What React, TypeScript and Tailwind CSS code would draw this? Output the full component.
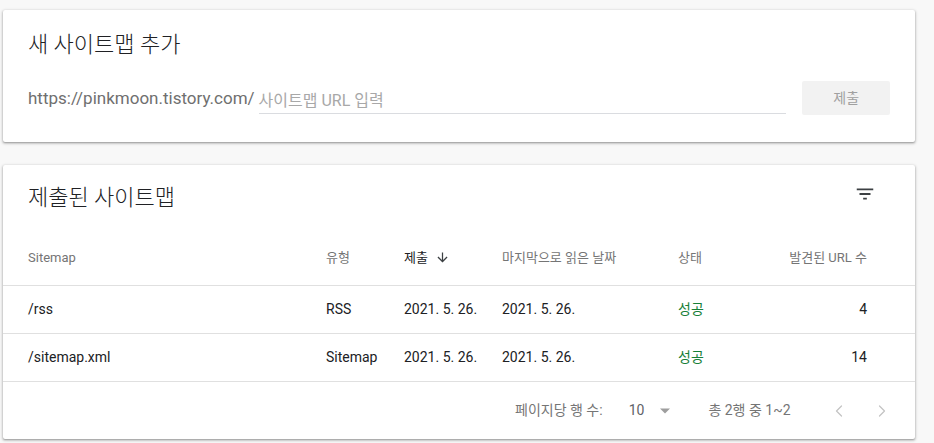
import { ChevronLeft, ChevronRight } from "lucide-react";

const ROWS = [
  { path: "/rss", type: "RSS", submitted: "2021. 5. 26.", read: "2021. 5. 26.", status: "성공", urls: 4 },
  { path: "/sitemap.xml", type: "Sitemap", submitted: "2021. 5. 26.", read: "2021. 5. 26.", status: "성공", urls: 14 },
];

const font = { fontFamily: 'Roboto, "Noto Sans CJK KR", sans-serif' };

function FilterIcon() {
  return (
    <svg width="22" height="22" viewBox="0 0 24 24" fill="#3c4043" aria-hidden>
      <path d="M10 18h4v-2h-4v2zM3 6v2h18V6H3zm3 7h12v-2H6v2z" />
    </svg>
  );
}

export default function App() {
  return (
    <div style={font} className="min-h-[443px] w-[934px] bg-[#f8f8f8] pt-[10px] pl-[3px]">
      {/* add sitemap card */}
      <section className="w-[912px] rounded-[2px] bg-white px-[25px] pt-[21px] pb-[27px] shadow-[0_1px_2px_rgba(0,0,0,0.3),0_1px_3px_1px_rgba(0,0,0,0.12)]">
        <h2 className="text-[22px] leading-[28px] font-light text-[#202124]">새 사이트맵 추가</h2>
        <div className="mt-[22px] flex items-center">
          <span className="text-[17px] leading-[24px] text-[#6f6f6f]">https://pinkmoon.tistory.com/</span>
          <div className="ml-[4px] mt-[6px] w-[530px] border-b border-[#dadce0]">
            <span className="block h-[24px] text-[16px] leading-[24px] text-[#a8a8a8]">사이트맵 URL 입력</span>
          </div>
          <button className="ml-[16px] h-[34px] w-[88px] rounded-[2px] bg-[#f2f2f2] text-[14px] text-[#a0a0a0]">
            제출
          </button>
        </div>
      </section>

      {/* submitted sitemaps card */}
      <section className="mt-[23px] w-[912px] rounded-[2px] bg-white shadow-[0_1px_2px_rgba(0,0,0,0.3),0_1px_3px_1px_rgba(0,0,0,0.12)]">
        <div className="flex items-center justify-between pt-[19px] pl-[25px] pr-[39px]">
          <h2 className="text-[22px] leading-[28px] font-light text-[#202124]">제출된 사이트맵</h2>
          <div className="-mt-[8px]">
            <FilterIcon />
          </div>
        </div>

        <div className="mt-[18px] flex h-[56px] items-center border-b border-[#e0e0e0] pl-[25px] pr-[48px] text-[13px] text-[#757575]">
          <div className="w-[298px]">Sitemap</div>
          <div className="w-[78px]">유형</div>
          <div className="flex w-[98px] items-center gap-[7px] text-[#202124]">
            제출
            <svg width="15" height="15" viewBox="0 0 24 24" fill="#3c4043" aria-hidden>
              <path d="M20 12l-1.41-1.41L13 16.17V4h-2v12.17l-5.58-5.59L4 12l8 8 8-8z" />
            </svg>
          </div>
          <div className="w-[176px]">마지막으로 읽은 날짜</div>
          <div className="w-[80px]">상태</div>
          <div className="flex-1 text-right">발견된 URL 수</div>
        </div>

        {ROWS.map((r) => (
          <div
            key={r.path}
            className="flex h-[48px] items-center border-b border-[#e0e0e0] pl-[25px] pr-[48px] text-[14px] text-[#202124]"
          >
            <div className="w-[298px]">{r.path}</div>
            <div className="w-[78px]">{r.type}</div>
            <div className="w-[98px]">{r.submitted}</div>
            <div className="w-[176px]">{r.read}</div>
            <div className="w-[80px] text-[#188038]">{r.status}</div>
            <div className="flex-1 text-right">{r.urls}</div>
          </div>
        ))}

        <div className="flex h-[57px] items-center pl-[512px] text-[14px] text-[#757575]">
          <span>페이지당 행 수:</span>
          <span className="ml-[26px] text-[#5f6368]">10</span>
          <svg className="ml-[16px]" width="10" height="6" viewBox="0 0 10 5" fill="#9e9e9e" aria-hidden>
            <path d="M0 0l5 5 5-5z" />
          </svg>
          <span className="ml-[38px]">총 2행 중 1~2</span>
          <ChevronLeft className="ml-[38px] text-[#c4c4c4]" size={20} strokeWidth={1.5} />
          <ChevronRight className="ml-[23px] text-[#c4c4c4]" size={20} strokeWidth={1.5} />
        </div>
      </section>
    </div>
  );
}
